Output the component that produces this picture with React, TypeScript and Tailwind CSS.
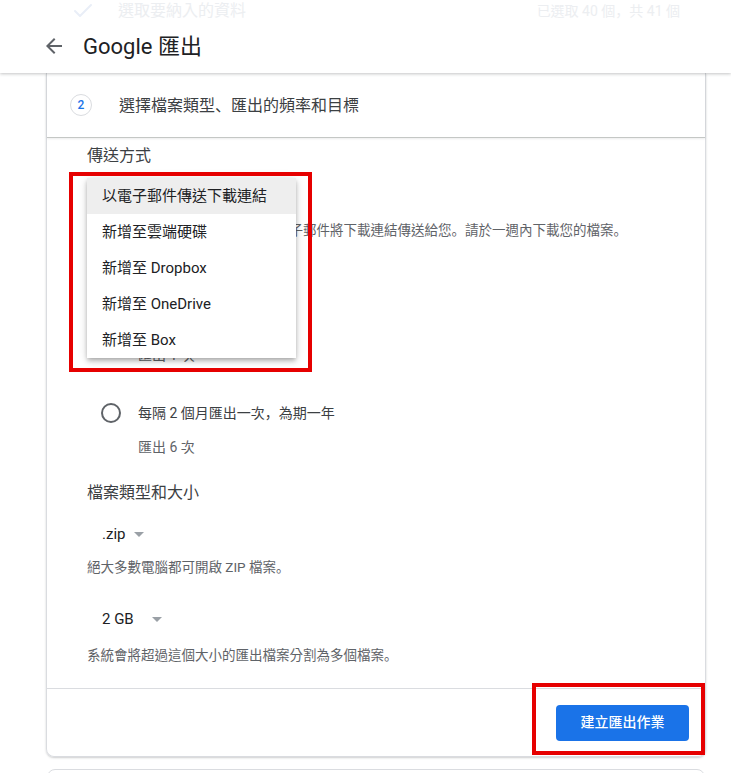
import React from 'react';
import { Check } from 'lucide-react';

const BackArrow = () => (
  <svg width="24" height="24" viewBox="0 0 24 24" fill="#5f6368">
    <path d="M20 11H7.83l5.59-5.59L12 4l-8 8 8 8 1.41-1.41L7.83 13H20v-2z" />
  </svg>
);

const Caret = () => (
  <span className="inline-block h-0 w-0 border-t-[5px] border-r-[5.5px] border-l-[5.5px] border-t-[#9aa0a6] border-r-transparent border-l-transparent" />
);

// full-width punctuation sits bottom-left in the reference, like the JP glyphs
const Zh = ({ text }: { text: string }) => (
  <>
    {text.split(/([，。、])/).map((part, i) =>
      /^[，。、]$/.test(part) ? (
        <span key={i} className="font-['Noto_Sans_CJK_JP',sans-serif]">
          {part}
        </span>
      ) : (
        part
      )
    )}
  </>
);

const menuItems = ['以電子郵件傳送下載連結', '新增至雲端硬碟', '新增至 Dropbox', '新增至 OneDrive', '新增至 Box'];

export default function App() {
  return (
    <div className="relative h-[773px] w-[731px] overflow-hidden bg-white font-['Roboto','Noto_Sans_CJK_TC',sans-serif]">
      {/* sticky header, previous step faded underneath */}
      <header className="relative z-10 h-[73px] bg-white shadow-[0_1px_3px_rgba(60,64,67,0.3)]">
        <div className="ml-[46px] flex h-[22px] w-[660px] items-center pr-[26px] pl-[25px] text-[#eceef1]">
          <Check size={24} strokeWidth={2} className="text-[#e9eef7]" />
          <span className="ml-[23px] text-[16px]">選取要納入的資料</span>
          <span className="ml-auto text-[14px]">
            <Zh text="已選取 40 個，共 41 個" />
          </span>
        </div>
        <div className="flex h-[48px] items-center pl-[42px]">
          <BackArrow />
          <span className="ml-[17px] text-[22px] text-[#202124]">Google 匯出</span>
        </div>
      </header>

      <div className="ml-[46px] w-[660px] rounded-b-lg border border-t-0 border-[#dadce0] shadow-[0_1px_2px_rgba(60,64,67,0.25)]">
        <div className="flex h-[65px] items-center border-b border-[#c4c7c5] pl-[23px] shadow-[0_1px_2px_rgba(0,0,0,0.08)]">
          <div className="flex h-[22px] w-[22px] items-center justify-center rounded-full border border-[#dadce0] text-[12px] font-medium text-[#1a73e8]">
            2
          </div>
          <span className="ml-[27px] text-[16px] text-[#3c4043]">
            <Zh text="選擇檔案類型、匯出的頻率和目標" />
          </span>
        </div>

        <div className="pb-[24px] pl-[40px]">
          <div className="mt-[6px] h-[24px] text-[16px] leading-[24px] text-[#3c4043]">傳送方式</div>
          <div className="mt-[10px] flex h-[36px] items-center pl-[15px] text-[15px] text-[#202124]">
            以電子郵件傳送下載連結
            <span className="ml-[9px] flex"><Caret /></span>
          </div>
          <div className="mt-[5px] h-[20px] text-[13.5px] leading-[20px] text-[#5f6368]">
            <Zh text="您的檔案準備就緒後，我們會以電子郵件將下載連結傳送給您。請於一週內下載您的檔案。" />
          </div>

          <div className="mt-[19px] h-[24px] text-[16px] leading-[24px] text-[#3c4043]">頻率</div>
          <div className="mt-[27px] flex h-[24px] items-center pl-[14px]">
            <span className="flex h-[20px] w-[20px] items-center justify-center rounded-full border-2 border-[#1a73e8]">
              <span className="h-[10px] w-[10px] rounded-full bg-[#1a73e8]" />
            </span>
            <span className="ml-[17px] text-[14px] text-[#3c4043]">匯出一次</span>
          </div>
          <div className="mt-[12px] h-[20px] pl-[51px] text-[14px] leading-[20px] text-[#5f6368]">匯出 1 次</div>
          <div className="mt-[36px] flex h-[24px] items-center pl-[14px]">
            <span className="h-[20px] w-[20px] rounded-full border-2 border-[#5f6368]" />
            <span className="ml-[17px] text-[14px] text-[#3c4043]">
              <Zh text="每隔 2 個月匯出一次，為期一年" />
            </span>
          </div>
          <div className="mt-[12px] h-[20px] pl-[51px] text-[14px] leading-[20px] text-[#5f6368]">匯出 6 次</div>

          <div className="mt-[24px] h-[24px] text-[16px] leading-[24px] text-[#3c4043]">檔案類型和大小</div>
          <div className="mt-[17px] flex h-[24px] items-center pl-[15px] text-[15px] text-[#202124]">
            .zip
            <span className="ml-[9px] flex"><Caret /></span>
          </div>
          <div className="mt-[10px] h-[20px] text-[13.5px] leading-[20px] text-[#5f6368]">
            <Zh text="絕大多數電腦都可開啟 ZIP 檔案。" />
          </div>
          <div className="mt-[31px] flex h-[24px] items-center pl-[15px] text-[15px] text-[#202124]">
            2 GB
            <span className="ml-[18px] flex"><Caret /></span>
          </div>
          <div className="mt-[13px] h-[20px] text-[13.5px] leading-[20px] text-[#5f6368]">
            <Zh text="系統會將超過這個大小的匯出檔案分割為多個檔案。" />
          </div>
        </div>

        <div className="flex h-[68px] items-center justify-end border-t border-[#dadce0] pr-[16px]">
          <button className="h-[36px] w-[133px] rounded bg-[#1a73e8] text-[14px] font-medium text-white">建立匯出作業</button>
        </div>
      </div>

      <div className="mt-[12px] ml-[47px] h-[40px] w-[658px] rounded-t-lg border border-[#dadce0]" />

      {/* open delivery menu */}
      <div className="absolute top-[178px] left-[87px] z-20 w-[209px] bg-white shadow-[0_2px_4px_-1px_rgba(0,0,0,0.2),0_4px_5px_rgba(0,0,0,0.14),0_1px_10px_rgba(0,0,0,0.12)]">
        {menuItems.map((item, i) => (
          <div
            key={item}
            className={`flex h-[36px] items-center pl-[15px] text-[15px] text-[#202124] ${i === 0 ? 'bg-[#eeeeee]' : ''}`}
          >
            {item}
          </div>
        ))}
      </div>

      {/* red annotation boxes */}
      <div className="absolute top-[172px] left-[69px] z-30 h-[200px] w-[243px] border-4 border-[#e60000]" />
      <div className="absolute top-[683px] left-[532px] z-30 h-[72px] w-[173px] border-4 border-[#e60000]" />
    </div>
  );
}
